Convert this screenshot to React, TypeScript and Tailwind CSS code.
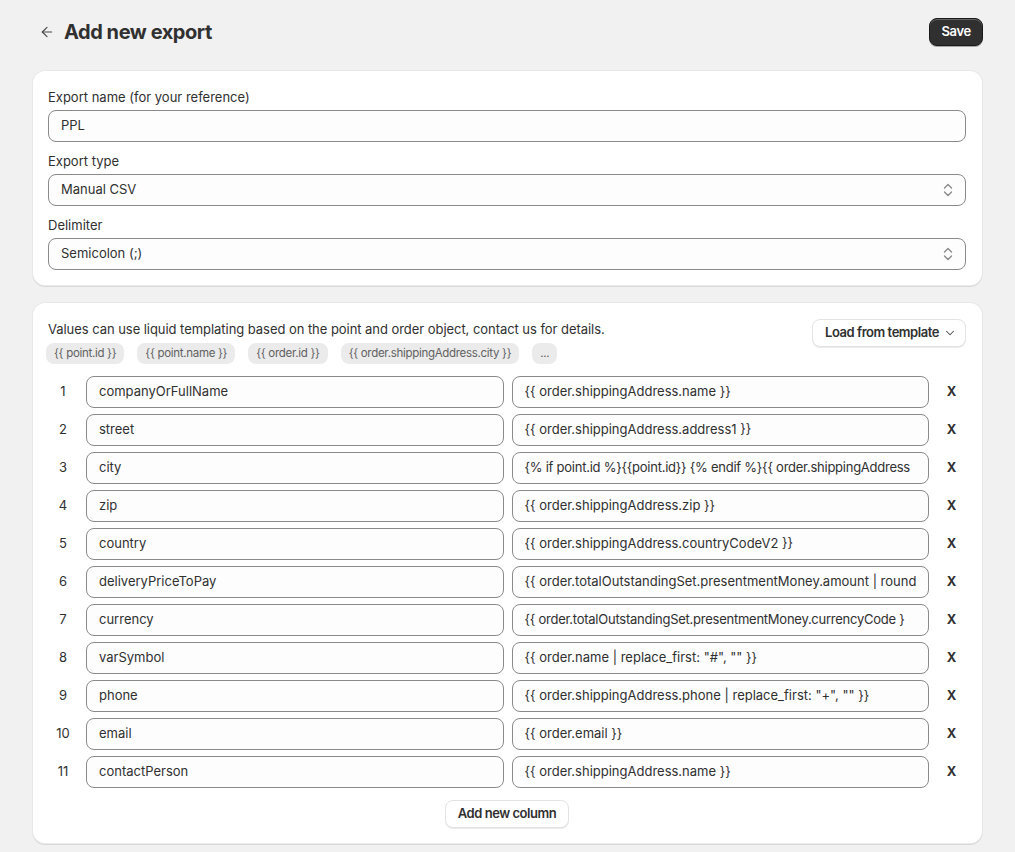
import { ArrowLeft, ChevronDown } from "lucide-react";

const columns: [string, string][] = [
  ["companyOrFullName", "{{ order.shippingAddress.name }}"],
  ["street", "{{ order.shippingAddress.address1 }}"],
  ["city", "{% if point.id %}{{point.id}} {% endif %}{{ order.shippingAddress"],
  ["zip", "{{ order.shippingAddress.zip }}"],
  ["country", "{{ order.shippingAddress.countryCodeV2 }}"],
  ["deliveryPriceToPay", "{{ order.totalOutstandingSet.presentmentMoney.amount | round"],
  ["currency", "{{ order.totalOutstandingSet.presentmentMoney.currencyCode }"],
  ["varSymbol", '{{ order.name | replace_first: "#", "" }}'],
  ["phone", '{{ order.shippingAddress.phone | replace_first: "+", "" }}'],
  ["email", "{{ order.email }}"],
  ["contactPerson", "{{ order.shippingAddress.name }}"],
];

const chips = ["{{ point.id }}", "{{ point.name }}", "{{ order.id }}", "{{ order.shippingAddress.city }}", "..."];

function SelectIcon() {
  return (
    <svg width="10" height="14" viewBox="0 0 10 14" className="shrink-0 text-[#8a8a8a]">
      <path d="M1.5 5l3.5-3.5L8.5 5M1.5 9l3.5 3.5L8.5 9" stroke="currentColor" strokeWidth="1.4" strokeLinecap="round" strokeLinejoin="round" fill="none" />
    </svg>
  );
}

function Field({ value, select, tight }: { value: string; select?: boolean; tight?: boolean }) {
  return (
    <div className="flex h-8 min-w-0 flex-1 items-center rounded-lg border border-[#8a8a8a] bg-[#fdfdfd] px-3">
      <div className={`min-w-0 flex-1 overflow-hidden whitespace-nowrap text-[13px] text-[#303030] ${tight ? "tracking-[-0.25px]" : ""}`}>
        {value}
      </div>
      {select && <SelectIcon />}
    </div>
  );
}

function Label({ children }: { children: string }) {
  return <div className="mb-[3px] h-5 text-[13px] leading-5 text-[#303030]">{children}</div>;
}

function Card({ children }: { children: React.ReactNode }) {
  return (
    <div className="rounded-xl bg-white py-4 pl-[15px] pr-4 shadow-[0_1px_0_0_rgba(26,26,26,0.07),0_0_0_1px_rgba(0,0,0,0.04),inset_0_-1px_0_0_rgba(0,0,0,0.08)]">
      {children}
    </div>
  );
}

export default function App() {
  return (
    <div className="min-h-screen bg-[#f1f1f1] px-[33px] pt-[18px] pb-8 font-['Inter',sans-serif] text-[#303030]">
      {/* Header */}
      <div className="flex h-7 items-center">
        <button className="flex h-7 w-7 items-center justify-center rounded-lg text-[#4a4a4a]">
          <ArrowLeft size={16} strokeWidth={1.75} />
        </button>
        <h1 className="ml-[3px] text-[20px] font-bold tracking-[-0.45px] text-[#303030]">Add new export</h1>
        <div className="flex-1" />
        <button className="mr-[-1px] flex h-7 items-center rounded-lg border border-[#1a1a1a] bg-[#303030] px-[11px] text-[13px] font-semibold tracking-[-0.3px] text-white shadow-[inset_0_1px_0_rgba(255,255,255,0.25),0_1px_0_rgba(0,0,0,0.3)]">
          Save
        </button>
      </div>

      <div className="mt-[25px] flex flex-col gap-[17px]">
        <Card>
          <div className="flex flex-col gap-[9px]">
            <div>
              <Label>Export name (for your reference)</Label>
              <Field value="PPL" />
            </div>
            <div>
              <Label>Export type</Label>
              <Field value="Manual CSV" select />
            </div>
            <div>
              <Label>Delimiter</Label>
              <Field value="Semicolon (;)" select />
            </div>
          </div>
        </Card>

        <Card>
          <div className="flex items-start justify-between">
            <div>
              <p className="h-5 text-[13px] leading-5 tracking-[-0.05px] text-[#303030]">
                Values can use liquid templating based on the point and order object, contact us for details.
              </p>
              <div className="mt-1 -ml-0.5 flex gap-[13px]">
                {chips.map((c) => (
                  <span key={c} className="flex h-[21px] items-center rounded-lg bg-[#ebebeb] px-2 text-[11.5px] tracking-[-0.3px] text-[#616161]">
                    {c}
                  </span>
                ))}
              </div>
            </div>
            <button className="flex h-7 items-center gap-1 rounded-lg border border-[#e3e3e3] bg-white pl-3 pr-2 text-[13px] font-semibold tracking-[-0.45px] text-[#303030] shadow-[0_1px_0_rgba(0,0,0,0.08)]">
              Load from template
              <ChevronDown size={14} strokeWidth={1.75} className="text-[#4a4a4a]" />
            </button>
          </div>

          <div className="mt-3 flex flex-col gap-1.5">
            {columns.map(([name, value], i) => (
              <div key={i} className="flex items-center gap-2">
                <div className="w-[30px] text-center text-[13px] text-[#303030]">{i + 1}</div>
                <Field value={name} />
                <Field value={value} tight={i === 2 || i === 6} />
                <div className="w-[29px] text-center text-[13px] font-bold text-[#303030]">X</div>
              </div>
            ))}
          </div>

          <div className="mt-3 flex justify-center">
            <button className="flex h-7 items-center rounded-lg border border-[#e3e3e3] bg-white px-3 text-[13px] font-semibold tracking-[-0.45px] text-[#303030] shadow-[0_1px_0_rgba(0,0,0,0.08)]">
              Add new column
            </button>
          </div>
        </Card>
      </div>
    </div>
  );
}
